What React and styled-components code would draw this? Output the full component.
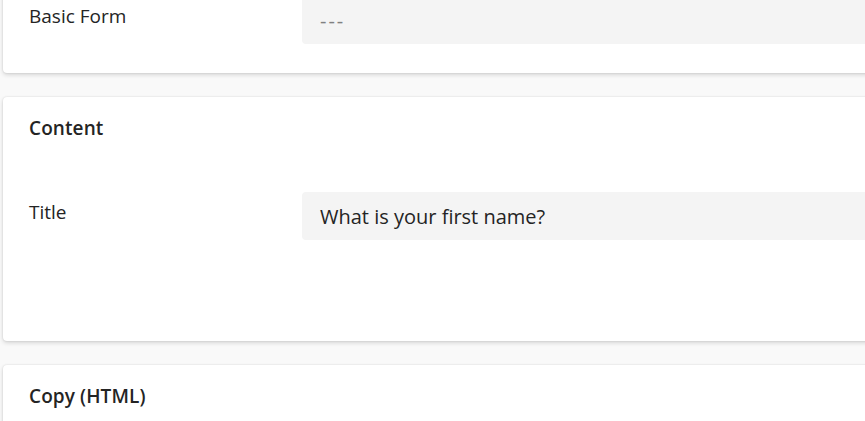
import styled, { createGlobalStyle } from 'styled-components';

const GlobalStyle = createGlobalStyle`
  html, body {
    margin: 0;
    background: #f9f9f9;
    overflow: hidden;
  }
  body {
    font-family: 'Open Sans', 'Noto Sans', sans-serif;
    color: #242424;
  }
`;

const Page = styled.div`
  display: flex;
  flex-direction: column;
  gap: 24px;
  width: 1000px;
  margin-top: -24px;
  padding-left: 3px;
`;

const Card = styled.section`
  background: #ffffff;
  border-radius: 4px;
  box-shadow: 0 0 2px rgba(0, 0, 0, 0.12), 0 2px 4px rgba(0, 0, 0, 0.14);
  padding: ${(p) => p.$pad || '19px 26px 29px'};
`;

const Heading = styled.h2`
  margin: 0;
  font-size: 19px;
  line-height: 24px;
  font-weight: 600;
  letter-spacing: 0.1px;
`;

const Row = styled.div`
  display: grid;
  grid-template-columns: 273px 1fr;
  margin-top: ${(p) => p.$top || 0}px;
`;

const Label = styled.label`
  padding-top: 8px;
  font-size: 19px;
  line-height: 24px;
`;

const Field = styled.div`
  height: 48px;
  display: flex;
  align-items: center;
  padding: 0 18px;
  background: #f4f4f4;
  border-radius: 4px;
  font-size: 20px;
  color: ${(p) => (p.$muted ? '#808080' : '#242424')};
  letter-spacing: ${(p) => (p.$muted ? '2px' : '0')};
`;

export default function App() {
  return (
    <>
      <GlobalStyle />
      <Page>
        <Card $pad="20px 26px 29px">
          <Row>
            <Label>Basic Form</Label>
            <Field $muted>---</Field>
          </Row>
        </Card>
        <Card $pad="19px 26px 101px">
          <Heading>Content</Heading>
          <Row $top={52}>
            <Label>Title</Label>
            <Field>What is your first name?</Field>
          </Row>
        </Card>
        <Card $pad="19px 26px 60px">
          <Heading>Copy (HTML)</Heading>
        </Card>
      </Page>
    </>
  );
}
